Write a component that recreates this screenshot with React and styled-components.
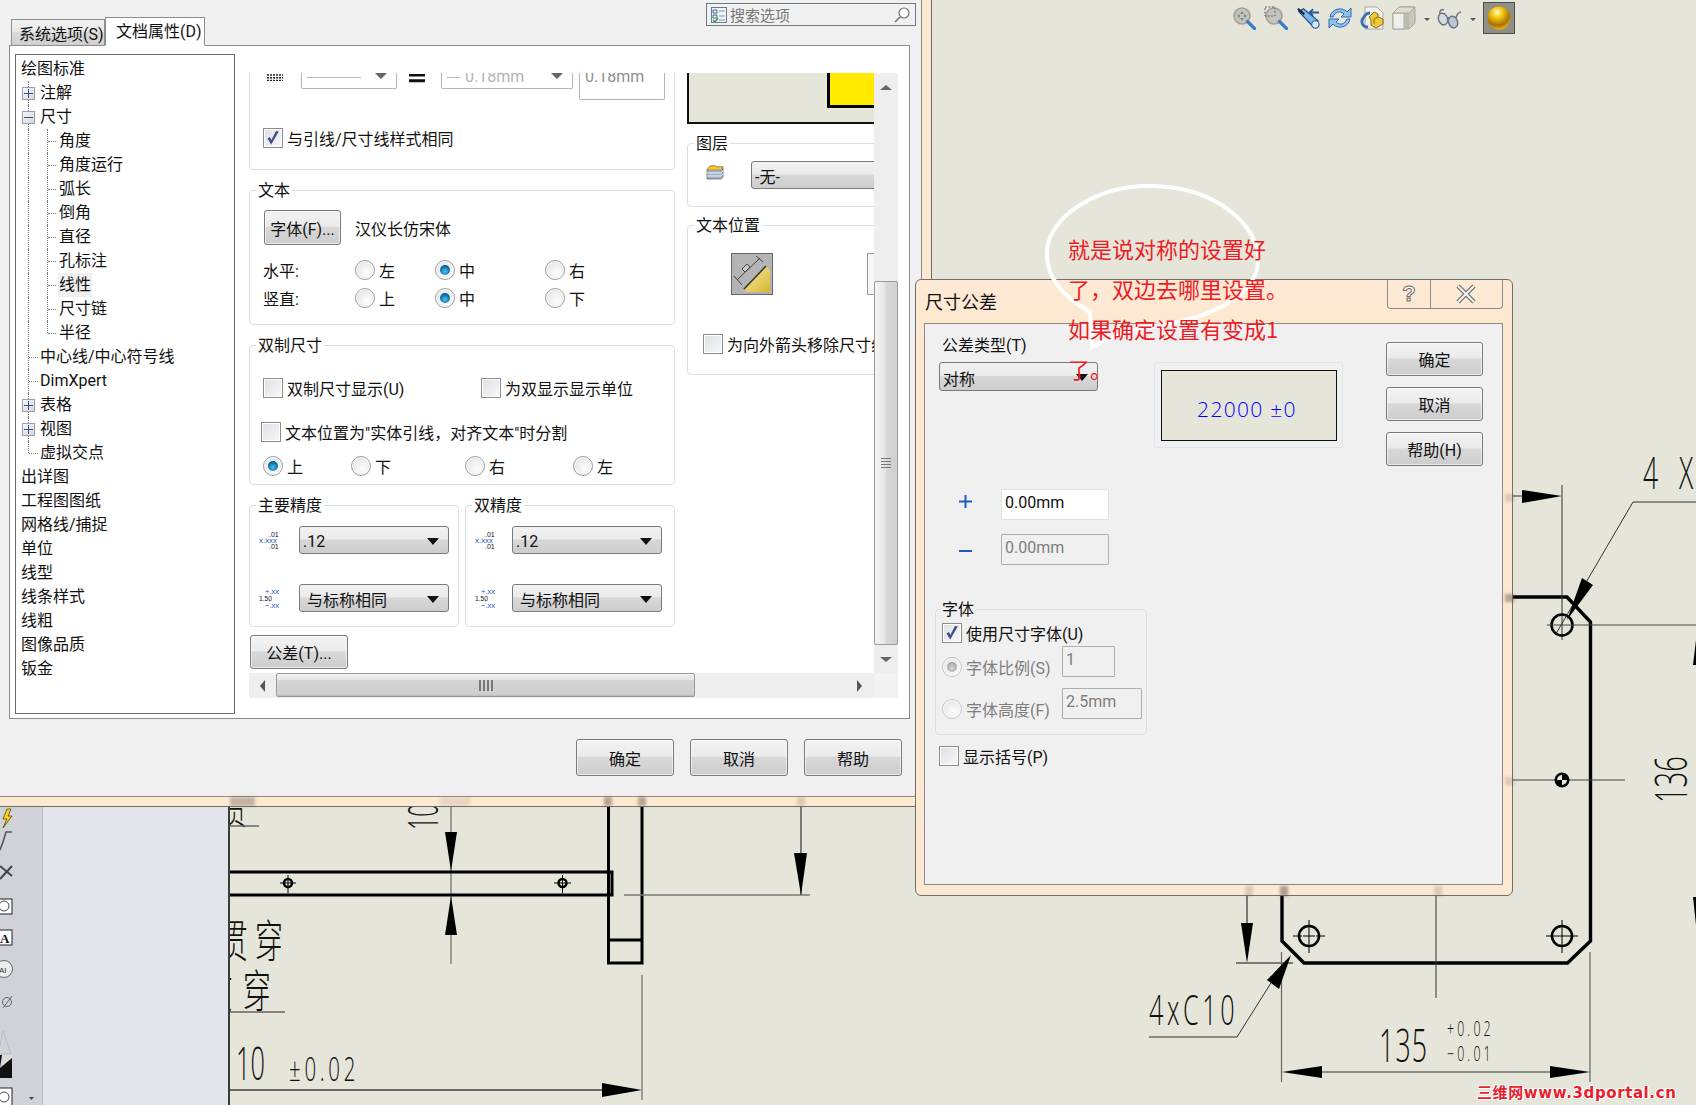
import React from "react";
import styled, { createGlobalStyle } from "styled-components";

const UI_FONT = `Roboto, "Noto Sans CJK SC", sans-serif`;

const GlobalStyle = createGlobalStyle`
  html, body { margin: 0; padding: 0; background: #e5e5da; }
  * { box-sizing: border-box; }
  body { font-family: ${UI_FONT}; font-size: 16px; color: #111; }
`;

const Page = styled.div`
  position: relative;
  width: 1696px;
  height: 1105px;
  overflow: hidden;
  display: flex;
  background: #e5e5da;
`;

/* ---------- workspace behind the dialogs ---------- */

const Palette = styled.div`
  width: 43px;
  display: flex;
  flex-direction: column;
  background: #cfd3d9;
  border-right: 1px solid #bcc0c6;
`;

const PaletteDrawing = styled.svg`
  display: block;
  margin-top: auto;
`;

const FeaturePanel = styled.div`
  width: 187px;
  background: #e2e6eb;
  border-right: 2px solid #3c3c3c;
`;

const CanvasArea = styled.div`
  flex: 1;
`;

const CadSvg = styled.svg`
  display: block;
`;

const CadLabel = styled.text`
  font-family: "Open Sans", "Liberation Sans", sans-serif;
  font-weight: 300;
  fill: #111;
`;

const CadHan = styled.text`
  font-family: "Noto Sans CJK SC", sans-serif;
  font-weight: 300;
  fill: #111;
`;

const CadToolbar = styled.div`
  position: absolute;
  left: 1232px;
  top: 2px;
  height: 32px;
  display: flex;
  align-items: center;
  gap: 8px;
`;

const ToolDrop = styled.span`
  width: 0;
  height: 0;
  margin: 3px -1px 0 0;
  border-left: 3px solid transparent;
  border-right: 3px solid transparent;
  border-top: 3px solid #555;
`;

const BallTool = styled.span`
  width: 32px;
  height: 32px;
  display: flex;
  align-items: center;
  justify-content: center;
  background: #8f8f86;
  border: 1px solid #4d4d4d;
`;

const Watermark = styled.div`
  position: absolute;
  left: 1477px;
  top: 1083px;
  font-family: "DejaVu Sans", "Noto Sans CJK SC", sans-serif;
  font-weight: 700;
  font-size: 15px;
  line-height: 20px;
  letter-spacing: 0.6px;
  color: #e8202c;
  white-space: nowrap;
  text-shadow: 1px 0 #fff, -1px 0 #fff, 0 1px #fff, 0 -1px #fff, 1px 1px #fff, -1px -1px #fff;
`;

/* ---------- shared dialog parts ---------- */

const Smudge = styled.span`
  position: absolute;
  left: ${(p) => p.$x}px;
  top: ${(p) => p.$y}px;
  width: ${(p) => p.$w}px;
  height: ${(p) => p.$h}px;
  background: rgba(90, 80, 70, ${(p) => p.$a});
  filter: blur(1.5px);
`;

const PushButton = styled.button`
  width: ${(p) => p.$w}px;
  height: ${(p) => p.$h}px;
  padding: 0;
  flex-shrink: 0;
  font-family: ${UI_FONT};
  font-size: 16px;
  color: #111;
  white-space: nowrap;
  border: 1px solid #7a7a7a;
  border-radius: 3px;
  background: linear-gradient(#f3f3f3 0, #ebebeb 46%, #d8d8d8 50%, #cdcdcd 100%);
  box-shadow: inset 0 0 0 1px rgba(255, 255, 255, 0.6);
`;

const Combo = styled.div`
  width: ${(p) => p.$w}px;
  height: ${(p) => p.$h}px;
  flex-shrink: 0;
  display: flex;
  align-items: center;
  justify-content: space-between;
  padding: 2px 9px 0 ${(p) => p.$pad ?? 3}px;
  font-size: 16px;
  white-space: nowrap;
  border: 1px solid #7a7a7a;
  border-radius: 3px;
  background: linear-gradient(#f1f1f1 0, #ebebeb 46%, #d8d8d8 50%, #cdcdcd 100%);
`;

const ComboArrow = styled.span`
  width: 0;
  height: 0;
  border-left: 6px solid transparent;
  border-right: 6px solid transparent;
  border-top: 7px solid ${(p) => p.$color || "#111"};
`;

const GroupBox = styled.div`
  position: relative;
  flex-shrink: 0;
  width: ${(p) => (p.$w ? `${p.$w}px` : "auto")};
  height: ${(p) => p.$h}px;
  margin-top: ${(p) => p.$mt || 0}px;
  padding: ${(p) => p.$pad || "0"};
  border: 1px solid #d6dfe7;
  border-radius: 4px;
`;

const GroupLegend = styled.span`
  position: absolute;
  left: ${(p) => p.$left ?? 6}px;
  top: -11px;
  padding: 0 2px;
  height: 22px;
  line-height: 22px;
  font-size: 16px;
  white-space: nowrap;
  background: ${(p) => p.$bg || "#fff"};
`;

const CheckBox = styled.span`
  display: flex;
  align-items: center;
  justify-content: center;
  width: 20px;
  height: 20px;
  flex-shrink: 0;
  border: 1px solid #8c8c8c;
  box-shadow: inset 0 0 0 1px #fff;
  background: linear-gradient(135deg, #dcdfe5, #f8f8f8);
`;

const Option = styled.label`
  display: flex;
  align-items: center;
  gap: 4px;
  white-space: nowrap;
  font-size: 16px;
  height: 20px;
  margin-left: ${(p) => p.$ml || 0}px;
  margin-top: ${(p) => p.$mt || 0}px;
  width: ${(p) => (p.$w ? `${p.$w}px` : "auto")};
  color: ${(p) => (p.$off ? "#7e7e7e" : "#111")};
`;

const RadioDot = styled.span`
  position: relative;
  width: 20px;
  height: 20px;
  flex-shrink: 0;
  border-radius: 50%;
  border: 1px solid ${(p) => (p.$off ? "#c6c6c6" : "#9c9c9c")};
  box-shadow: inset 0 0 0 1px #fff;
  background: radial-gradient(circle at 60% 65%, #fdfdfd, #dcdee2);

  &::after {
    content: "";
    display: ${(p) => (p.$on ? "block" : "none")};
    position: absolute;
    left: 4px;
    top: 4px;
    width: 10px;
    height: 10px;
    border-radius: 50%;
    background: ${(p) =>
      p.$off
        ? "radial-gradient(circle at 50% 60%, #d6d6d6, #8e8e8e)"
        : "radial-gradient(circle at 50% 65%, #4cc2ee, #0b6ca6 60%, #053a66)"};
  }
`;

function Check({ checked }) {
  return (
    <CheckBox>
      {checked && (
        <svg width="16" height="16" viewBox="0 0 16 16">
          <path d="M2.5 8.5 L6.2 14.5 L13.8 1.5 L11 1 L6.4 10 L5 7 Z" fill="#3f4d8c" />
        </svg>
      )}
    </CheckBox>
  );
}

/* ---------- main options dialog ---------- */

const MainFrame = styled.div`
  position: absolute;
  left: 0;
  top: 0;
  width: 932px;
  height: 807px;
  background: #fde8d2;
  border-right: 1px solid #6e6e66;
  border-bottom: 1px solid #6e6e66;
`;

const MainBody = styled.div`
  width: 922px;
  height: 797px;
  background: #f0f0f0;
  border-right: 1px solid #8c8c8c;
  border-bottom: 1px solid #8c8c8c;
`;

const TabStrip = styled.div`
  height: 45px;
  display: flex;
  align-items: flex-end;
  padding-left: 11px;
`;

const Tab = styled.div`
  position: relative;
  height: ${(p) => (p.$active ? 29 : 27)}px;
  width: ${(p) => p.$w}px;
  margin-bottom: -1px;
  padding: ${(p) => (p.$active ? "3px 0 0 10px" : "4px 0 0 7px")};
  font-size: 16px;
  line-height: 22px;
  white-space: nowrap;
  border: 1px solid #8f8f8f;
  border-bottom: ${(p) => (p.$active ? "1px solid #fff" : "1px solid #8f8f8f")};
  background: ${(p) =>
    p.$active ? "#fff" : "linear-gradient(#f2f2f2 0, #e8e8e8 45%, #d9d9d9 50%, #cfcfcf 100%)"};
  z-index: ${(p) => (p.$active ? 1 : 0)};
`;

const SearchBox = styled.div`
  align-self: flex-start;
  margin: 3px 5px 0 auto;
  width: 210px;
  height: 23px;
  display: flex;
  align-items: center;
  gap: 3px;
  padding: 0 4px;
  font-size: 15px;
  color: #777;
  background: #f1f1f1;
  border: 1px solid #6f7a80;
`;

const SearchText = styled.span`
  flex: 1;
`;

const OptionsPanel = styled.div`
  width: 901px;
  height: 674px;
  margin-left: 9px;
  padding: 8px 0 0 5px;
  display: flex;
  align-items: flex-start;
  background: #fff;
  border: 1px solid #8c8c8c;
`;

const Tree = styled.ul`
  list-style: none;
  width: 220px;
  height: 660px;
  margin: 0;
  padding: 2px 0 0;
  border: 1px solid #6c6c6c;
  background: #fff;
`;

const TreeRow = styled.li`
  position: relative;
  height: 24px;
  line-height: 24px;
  padding-left: ${(p) => [5, 24, 43][p.$level]}px;
  font-size: 16px;
  white-space: nowrap;
`;

const TreeText = styled.span`
  position: relative;
  z-index: 1;
  display: inline-block;
  padding: 0 1px;
  margin-left: -1px;
  background: ${(p) => (p.$selected ? "#f0f0f0" : "transparent")};
`;

const GuideV = styled.i`
  position: absolute;
  left: ${(p) => p.$left}px;
  top: 0;
  height: ${(p) => (p.$half ? "12px" : "24px")};
  border-left: 1px dotted #777;
`;

const GuideH = styled.i`
  position: absolute;
  left: ${(p) => p.$left}px;
  top: 12px;
  width: ${(p) => p.$w}px;
  border-top: 1px dotted #777;
`;

const Expander = styled.i`
  position: absolute;
  left: 6px;
  top: 6px;
  width: 13px;
  height: 13px;
  z-index: 1;
  border: 1px solid #9b9fa8;
  background: linear-gradient(135deg, #f7f7f7, #d5d7dc);

  &::before {
    content: "";
    position: absolute;
    left: 1px;
    top: 5px;
    width: 9px;
    height: 1px;
    background: #33508c;
  }

  &::after {
    content: "";
    display: ${(p) => (p.$open ? "none" : "block")};
    position: absolute;
    left: 5px;
    top: 1px;
    width: 1px;
    height: 9px;
    background: #33508c;
  }
`;

const ScrollArea = styled.div`
  margin: 19px 0 0 14px;
  display: grid;
  grid-template-columns: 625px 24px;
  grid-template-rows: 600px 25px;
`;

const ScrollView = styled.div`
  overflow: hidden;
  background: #fff;
`;

const ScrollContent = styled.div`
  display: flex;
  align-items: flex-start;
  gap: 12px;
  margin-top: -60px;
`;

const LeftColumn = styled.div`
  width: 426px;
  flex-shrink: 0;
`;

const RightColumn = styled.div`
  width: 230px;
  flex-shrink: 0;
`;

const LineRow = styled.div`
  display: flex;
  align-items: flex-start;
  padding: 39px 0 0 17px;
  height: 86px;
`;

const LineSwatch = styled.svg`
  flex-shrink: 0;
  margin: 21px 0 0 ${(p) => p.$ml || 0}px;
`;

const GhostField = styled.div`
  width: ${(p) => p.$w}px;
  height: ${(p) => p.$h}px;
  margin-left: ${(p) => p.$ml}px;
  flex-shrink: 0;
  display: flex;
  align-items: flex-start;
  justify-content: space-between;
  padding: 17px 9px 0 5px;
  font-size: 16px;
  line-height: 16px;
  color: ${(p) => p.$color || "#b3b3b3"};
  border: 1px solid #b4b4b4;
  border-top: 0;
  border-radius: 2px;
`;

const GhostDash = styled.span`
  flex: 1;
  min-height: 16px;
  display: flex;
  align-items: center;
  gap: 5px;
  margin-top: -1px;
`;

const GhostRule = styled.i`
  display: block;
  width: ${(p) => p.$w}px;
  height: 1px;
  background: #b8b8b8;
`;

const GhostArrow = styled.span`
  width: 0;
  height: 0;
  margin-top: 3px;
  border-left: 6px solid transparent;
  border-right: 6px solid transparent;
  border-top: 6px solid #666;
`;

const FontRow = styled.div`
  display: flex;
  align-items: center;
  padding: 19px 0 0 14px;
`;

const FontName = styled.span`
  margin-left: 14px;
  font-size: 16px;
`;

const RadioGrid = styled.div`
  display: grid;
  grid-template-columns: 92px 80px 110px auto;
  grid-auto-rows: 28px;
  align-items: center;
  margin-top: 11px;
  padding-left: 13px;
`;

const DualChecks = styled.div`
  display: flex;
  padding: 32px 0 0 13px;
`;

const RadioRow = styled.div`
  display: flex;
  margin-top: 14px;
  padding-left: 13px;
`;

const PrecisionRow = styled.div`
  display: flex;
  gap: 6px;
  margin-top: 20px;
`;

const PrecisionLine = styled.div`
  display: flex;
  align-items: center;
  gap: ${(p) => p.$gap}px;
  height: 28px;
  padding-left: 9px;
  margin-top: ${(p) => p.$mt}px;
`;

const IconText = styled.text`
  font-family: "Liberation Sans", sans-serif;
  font-size: ${(p) => p.$size || 7}px;
  fill: ${(p) => p.$fill || "#111"};
`;

const Preview = styled.div`
  height: 111px;
  padding-left: 138px;
  background: #e5e5da;
  border-left: 2px solid #111;
  border-bottom: 2px solid #111;
`;

const PreviewYellow = styled.div`
  width: 80px;
  height: 95px;
  background: #ffea00;
  border-left: 3px solid #000;
  border-bottom: 3px solid #000;
`;

const LayerRow = styled.div`
  display: flex;
  align-items: center;
  gap: 27px;
  padding: 17px 0 0 18px;
`;

const LayerIcon = styled.svg`
  flex-shrink: 0;
  margin-top: -6px;
`;

const ArrowRow = styled.div`
  display: flex;
  gap: 94px;
  padding: 27px 0 0 43px;
`;

const ArrowTile = styled.div`
  width: ${(p) => p.$w}px;
  height: 42px;
  background: ${(p) => (p.$plain ? "#f7f7f7" : "#b4b4b4")};
  border: 1px solid ${(p) => (p.$plain ? "#9a9a9a" : "#666")};
  flex-shrink: 0;
`;

const ScrollTrackV = styled.div`
  grid-column: 2;
  grid-row: 1;
  display: flex;
  flex-direction: column;
  background: #eeeeee;
`;

const ArrowCell = styled.div`
  display: flex;
  align-items: center;
  justify-content: ${(p) => (p.$pl ? "flex-start" : "center")};
  flex-shrink: 0;
  width: ${(p) => p.$w || 24}px;
  height: ${(p) => p.$h || 25}px;
  padding-left: ${(p) => p.$pl || 0}px;
`;

const ScrollThumbV = styled.div`
  width: 24px;
  height: 364px;
  margin-top: 180px;
  display: flex;
  flex-direction: column;
  align-items: center;
  justify-content: center;
  gap: 2px;
  border: 1px solid #9a9a9a;
  border-radius: 2px;
  background: linear-gradient(90deg, #f4f4f4 0, #e6e6e6 45%, #d8d8d8 50%, #cfcfcf 100%);
`;

const GripH = styled.i`
  display: block;
  width: 10px;
  height: 1px;
  background: #777;
`;

const ScrollTrackH = styled.div`
  grid-column: 1;
  grid-row: 2;
  display: flex;
  background: #eeeeee;
`;

const ScrollThumbH = styled.div`
  width: 419px;
  height: 24px;
  display: flex;
  align-items: center;
  justify-content: center;
  gap: 2px;
  border: 1px solid #9a9a9a;
  border-radius: 2px;
  background: linear-gradient(#f3f3f3 0, #e6e6e6 25%, #d4d4d6 30%, #cfcfd1 90%, #bcbcbc 100%);
`;

const GripV = styled.i`
  display: block;
  width: 2px;
  height: 11px;
  background: #777;
`;

const ScrollCorner = styled.div`
  grid-column: 2;
  grid-row: 2;
  background: #f2f2f2;
`;

const Triangle = styled.span`
  width: 0;
  height: 0;
  ${(p) =>
    p.$dir === "up" && `border-left:6px solid transparent;border-right:6px solid transparent;border-bottom:5px solid #666;`}
  ${(p) =>
    p.$dir === "down" && `border-left:6px solid transparent;border-right:6px solid transparent;border-top:5px solid #666;`}
  ${(p) =>
    p.$dir === "left" && `border-top:6px solid transparent;border-bottom:6px solid transparent;border-right:5px solid #555;`}
  ${(p) =>
    p.$dir === "right" && `border-top:6px solid transparent;border-bottom:6px solid transparent;border-left:5px solid #555;`}
`;

const DialogFooter = styled.div`
  display: flex;
  justify-content: flex-end;
  gap: 16px;
  padding: 20px 19px 0 0;
`;

const ToleranceOpen = styled.div`
  margin: 8px 0 0 1px;
`;

/* ---------- tolerance dialog ---------- */

const ToleranceFrame = styled.div`
  position: absolute;
  left: 915px;
  top: 279px;
  width: 598px;
  height: 617px;
  display: flex;
  flex-direction: column;
  border: 1px solid #6f6f69;
  border-radius: 6px;
  background: linear-gradient(#fde9d5, #fde7cf 60px, #fde8d2);
`;

const TitleBar = styled.div`
  height: 43px;
  flex-shrink: 0;
  display: flex;
  align-items: flex-start;
  padding-left: 9px;
`;

const TitleText = styled.span`
  margin-top: 10px;
  font-size: 18px;
  line-height: 25px;
`;

const WindowButtons = styled.div`
  display: flex;
  margin: 0 9px 0 auto;
  width: 116px;
  height: 29px;
  border: 1px solid #8d8d8d;
  border-top: 0;
  border-radius: 0 0 4px 4px;
`;

const WindowButton = styled.span`
  flex: ${(p) => p.$flex};
  display: flex;
  align-items: center;
  justify-content: center;
  border-left: ${(p) => (p.$sep ? "1px solid #8d8d8d" : "0")};
`;

const HelpGlyph = styled.span`
  font-family: "Liberation Sans", sans-serif;
  font-weight: 700;
  font-size: 22px;
  line-height: 24px;
  color: #fff;
  -webkit-text-stroke: 1px #6a6a6a;
`;

const ToleranceBody = styled.div`
  flex: 1;
  margin: 0 9px 10px 8px;
  background: #f0f0f0;
  border: 1px solid #8a8a8a;
`;

const TopRow = styled.div`
  display: flex;
  align-items: flex-start;
  padding-left: 14px;
`;

const TypeColumn = styled.div`
  width: 159px;
  margin-top: 10px;
`;

const FieldCaption = styled.div`
  height: 28px;
  line-height: 24px;
  padding-left: 3px;
  font-size: 16px;
`;

const SamplePane = styled.div`
  width: 189px;
  height: 86px;
  margin: 38px 0 0 56px;
  padding: 7px 6px;
  border: 1px solid #dde5ec;
  border-radius: 3px;
`;

const SampleBox = styled.div`
  width: 176px;
  height: 71px;
  display: flex;
  align-items: center;
  justify-content: center;
  padding: 6px 4px 0 0;
  background: #e5e5da;
  border: 1.5px solid #111;
  color: #0000ff;
  font-family: "Open Sans", sans-serif;
  font-weight: 300;
  font-size: 21px;
  letter-spacing: 1.3px;
`;

const ActionColumn = styled.div`
  display: flex;
  flex-direction: column;
  gap: 11px;
  margin: 18px 0 0 43px;
`;

const ToleranceLine = styled.div`
  display: flex;
  align-items: center;
  padding-left: 34px;
  margin-top: ${(p) => p.$mt}px;
`;

const SignMark = styled.svg`
  width: 13px;
  margin: ${(p) => p.$raise || 0}px 29px 0 0;
  flex-shrink: 0;
`;

const TextField = styled.div`
  width: ${(p) => p.$w}px;
  height: 31px;
  flex-shrink: 0;
  padding: 1px 3px;
  line-height: 24px;
  font-size: 16px;
  color: ${(p) => (p.$off ? "#7e7e7e" : "#111")};
  background: ${(p) => (p.$off ? "#f0f0f0" : "#fff")};
  border: 1px solid ${(p) => (p.$off ? "#aeaeae" : "#e2e2e2")};
  border-radius: 1px;
`;

const FontGroup = styled(GroupBox)`
  margin-left: 10px;
  padding: 13px 0 0 6px;
`;

const FontLine = styled.div`
  display: flex;
  align-items: flex-end;
  margin-top: ${(p) => p.$mt}px;
`;

const FontOption = styled(Option)`
  width: 120px;
`;

/* ---------- annotation drawn over everything ---------- */

const BubbleOutline = styled.svg`
  position: absolute;
  left: 1030px;
  top: 170px;
`;

const Annotation = styled.div`
  position: absolute;
  left: 1068px;
  top: 228px;
  font-family: "Noto Sans CJK SC", sans-serif;
  font-size: 22px;
  line-height: 40px;
  white-space: nowrap;
  color: #ee1c25;
`;

/* ---------- small drawings ---------- */

function MagnifierIcon({ boxed }) {
  return (
    <svg width="24" height="24" viewBox="0 0 24 24">
      <circle cx="10" cy="10" r="8" fill="#c4c4bc" stroke="#a2a29b" strokeWidth="1.6" />
      {boxed ? (
        <rect x="1" y="1" width="10" height="9" fill="none" stroke="#5c5c5c" strokeDasharray="2 1.5" />
      ) : (
        <path d="M10 5 L12 8 H8 Z M10 15 L12 12 H8 Z M5 10 L8 8 V12 Z M15 10 L12 8 V12 Z" fill="#8a8a8a" />
      )}
      <path d="M15.5 15.5 L22.5 22.5" stroke="#3a7cc4" strokeWidth="3.2" strokeLinecap="round" />
    </svg>
  );
}

function ViewSelectorIcon() {
  return (
    <svg width="24" height="24" viewBox="0 0 26 24">
      <path d="M3 5 L8 2 L24 15 L19 22 Z" fill="#79b8ec" stroke="#1f4676" strokeWidth="1.2" />
      <ellipse cx="21" cy="19" rx="4" ry="4" fill="#d5eafa" stroke="#2d5e96" strokeWidth="1.3" />
      <path d="M2 2 L9 8" stroke="#16243c" strokeWidth="2.4" />
      <path d="M25 6 H15 M18.5 2.5 L14.5 6 L18.5 9.5" fill="none" stroke="#2d5a9c" strokeWidth="2" />
    </svg>
  );
}

function RefreshIcon() {
  return (
    <svg width="24" height="24" viewBox="0 0 24 24">
      <path d="M2 11 C3 3 14 0 19 6 L23 2 V11 H13 L16 8 C12 4 7 6 5 11 Z" fill="#8fc0ee" stroke="#2f6cb2" />
      <path d="M22 13 C21 21 10 24 5 18 L1 22 V13 H11 L8 16 C12 20 17 18 19 13 Z" fill="#8fc0ee" stroke="#2f6cb2" />
    </svg>
  );
}

function PartIcon() {
  return (
    <svg width="24" height="24" viewBox="0 0 24 24">
      <path d="M5 1 H17 L23 7 V23 H5 Z" fill="#f0f1ef" stroke="#a8a8a8" />
      <path d="M4 11 C0 15 2 21 8 21 M10 7 C7 7 5 9 4 11" fill="none" stroke="#3a70b0" strokeWidth="2.8" />
      <path d="M9 11 L14 6 L18 8 L18 11 L23 13 L23 18 L16 22 L11 19 V14 Z" fill="#f0c93a" stroke="#8c6d14" />
      <path d="M14 13 L18 11 M14 13 V18" stroke="#8c6d14" />
    </svg>
  );
}

function BoxIcon() {
  return (
    <svg width="24" height="24" viewBox="0 0 24 24">
      <path d="M1 7 L7 1 H23 V17 L17 23 H1 Z" fill="#c7c7bc" stroke="#a5a59b" />
      <path d="M1 7 H12 V23 H1 Z" fill="#eeeeea" stroke="#a5a59b" />
      <path d="M1 7 L7 1 H23 L17 7 Z" fill="#dcdcd2" stroke="#a5a59b" />
      <path d="M12 7 H17 V23 H12 Z" fill="#b9b9ae" />
    </svg>
  );
}

function GlassesIcon() {
  return (
    <svg width="25" height="24" viewBox="0 0 25 24">
      <ellipse cx="6" cy="13" rx="4.5" ry="6" fill="#d6dbe0" stroke="#6d7380" strokeWidth="1.5" transform="rotate(-20 6 13)" />
      <ellipse cx="16" cy="16" rx="4.5" ry="6" fill="#b8c6d8" stroke="#6d7380" strokeWidth="1.5" transform="rotate(-20 16 16)" />
      <path d="M10 12 L13 12 M3 8 C2 4 5 3 7 4 M19 12 C20 8 22 6 24 6" fill="none" stroke="#6d7380" strokeWidth="1.5" />
    </svg>
  );
}

function GoldBallIcon() {
  return (
    <svg width="24" height="24" viewBox="0 0 24 24">
      <defs>
        <radialGradient id="gold" cx="42%" cy="26%" r="75%">
          <stop offset="0" stopColor="#fffbd0" />
          <stop offset="0.3" stopColor="#f7cc12" />
          <stop offset="0.75" stopColor="#a86f04" />
          <stop offset="1" stopColor="#f0b414" />
        </radialGradient>
      </defs>
      <circle cx="12" cy="12" r="11.5" fill="url(#gold)" />
    </svg>
  );
}

function ChecklistIcon() {
  return (
    <svg width="16" height="16" viewBox="0 0 16 16">
      <rect x="0.5" y="0.5" width="15" height="15" fill="#eef3f6" stroke="#5e7f9a" />
      <path d="M2 3 H6 V6 H2 Z M2 8 H6 V11 H2 Z" fill="none" stroke="#46688a" />
      <path d="M8 4 H14 M8 9 H14 M8 13 H14" stroke="#8a9aa8" />
      <path d="M2 13 L4 15 L7 11" fill="none" stroke="#3a9a3a" strokeWidth="1.4" />
    </svg>
  );
}

function SearchGlass() {
  return (
    <svg width="18" height="18" viewBox="0 0 18 18">
      <circle cx="11" cy="7" r="5" fill="#fafafa" stroke="#777" strokeWidth="1.2" />
      <path d="M7 11 L2 16" stroke="#777" strokeWidth="1.6" />
    </svg>
  );
}

function PrecisionTop() {
  return (
    <svg width="20" height="18" viewBox="0 0 20 18">
      <IconText x="10" y="6" $size="7">.01</IconText>
      <IconText x="0" y="12" $size="8" $fill="#1e54c8" textLength="18" lengthAdjust="spacingAndGlyphs">x.xxx</IconText>
      <IconText x="10" y="18" $size="7">.01</IconText>
    </svg>
  );
}

function PrecisionBottom() {
  return (
    <svg width="20" height="20" viewBox="0 0 20 20">
      <IconText x="6" y="6" $size="8" $fill="#1e54c8" textLength="14" lengthAdjust="spacingAndGlyphs">+.xx</IconText>
      <IconText x="0" y="13" $size="7.5" textLength="13" lengthAdjust="spacingAndGlyphs">1.50</IconText>
      <IconText x="6" y="20" $size="8" $fill="#1e54c8" textLength="14" lengthAdjust="spacingAndGlyphs">−.xx</IconText>
    </svg>
  );
}

function TextPlacementIcon() {
  return (
    <svg width="40" height="40" viewBox="0 0 40 40">
      <defs>
        <linearGradient id="wedge" x1="0" y1="0" x2="1" y2="1">
          <stop offset="0" stopColor="#f6ecaa" />
          <stop offset="1" stopColor="#d8b62f" />
        </linearGradient>
      </defs>
      <path d="M12 34 L34 12 L38 16 V38 H14 Z" fill="url(#wedge)" />
      <path d="M12 35 L34 12" stroke="#333" strokeWidth="1.6" />
      <path d="M5 26 L28 4 M2 22 L10 31 M24 2 L31 8" fill="none" stroke="#444" strokeWidth="1" />
      <path d="M10 15 L15 10 L18 13 L13 18 Z" fill="#c9c9c9" stroke="#444" />
    </svg>
  );
}

function PaletteIcons() {
  return (
    <PaletteDrawing width="42" height="299" viewBox="0 0 42 299">
      <path d="M7 3 L3 13 H7 L3 22 L12 10 H8 L11 3 Z" fill="#ffd21e" stroke="#554400" strokeWidth="0.8" />
      <path d="M0 44 L3 36 L6 26 H12" fill="none" stroke="#555" strokeWidth="1.6" />
      <path d="M0 73 L12 60 M0 60 L12 70" fill="none" stroke="#444" strokeWidth="2" />
      <rect x="-3" y="93" width="15" height="15" fill="#fff" stroke="#222" />
      <circle cx="4" cy="100" r="5" fill="#fff" stroke="#444" />
      <rect x="-3" y="124" width="15" height="15" fill="#fff" stroke="#222" />
      <text x="0" y="137" fontSize="13" fontWeight="700" fontFamily="Liberation Serif" fill="#111">A</text>
      <circle cx="4" cy="163" r="8.5" fill="#eee" stroke="#666" />
      <text x="-1" y="167" fontSize="8" fontFamily="Liberation Sans" fill="#333">AI</text>
      <circle cx="7" cy="196" r="4.5" fill="none" stroke="#666" />
      <path d="M3 202 L12 190" stroke="#666" />
      <path d="M-2 248 L3 225 L11 248 Z" fill="none" stroke="#bbb" />
      <rect x="-2" y="249" width="14" height="23" fill="#111" />
      <path d="M2 249 L12 249 L12 252 L0 262 Z" fill="#ddd" />
      <rect x="-3" y="282" width="15" height="18" fill="#fff" stroke="#222" />
      <circle cx="4" cy="291" r="5" fill="#fff" stroke="#444" />
      <path d="M29 291 L34 291 L31.5 294 Z" fill="#444" />
    </PaletteDrawing>
  );
}

function CadDrawing() {
  return (
    <CadSvg width="1466" height="1105" viewBox="230 0 1466 1105">
      {/* left view */}
      <g transform="translate(222 824) scale(0.62 1)">
        <CadHan fontSize="40">贯</CadHan>
      </g>
      <path d="M230 826 H259" stroke="#666" strokeWidth="1.5" />
      <g transform="translate(438 830) rotate(-90) scale(0.55 1)">
        <CadLabel fontSize="42" fontWeight="400">10</CadLabel>
      </g>
      <path d="M451 800 V964" stroke="#555" strokeWidth="1" />
      <path d="M445 832 H457 L451 871 Z M445 935 H457 L451 896 Z" fill="#000" />
      <path d="M230 872 H612 V895 H230" fill="none" stroke="#000" strokeWidth="3" />
      <path d="M608.5 800 V963 H642 V800 M608.5 940 H642" fill="none" stroke="#000" strokeWidth="3" />
      <circle cx="288" cy="883" r="4" fill="none" stroke="#000" strokeWidth="2.5" />
      <path d="M280 883 H296 M288 875 V893" stroke="#000" />
      <circle cx="562.5" cy="883" r="4" fill="none" stroke="#000" strokeWidth="2.5" />
      <path d="M554 883 H571 M562.5 875 V893" stroke="#000" />
      <path d="M624 895 H810" stroke="#777" strokeWidth="1.5" />
      <path d="M801 800 V895" stroke="#555" strokeWidth="1.5" />
      <path d="M794 853 H807 L801 895 Z" fill="#000" />
      <g transform="translate(220 958) scale(0.62 1)">
        <CadHan fontSize="45">贯</CadHan>
      </g>
      <g transform="translate(255 958) scale(0.62 1)">
        <CadHan fontSize="45">穿</CadHan>
      </g>
      <g transform="translate(205 1008) scale(0.62 1)">
        <CadHan fontSize="45">贯</CadHan>
      </g>
      <g transform="translate(243 1008) scale(0.62 1)">
        <CadHan fontSize="45">穿</CadHan>
      </g>
      <path d="M230 1012 H285" stroke="#222" />
      <g transform="translate(236 1080) scale(0.55 1)">
        <CadLabel fontSize="46">10</CadLabel>
      </g>
      <g transform="translate(289 1081) scale(0.62 1)">
        <CadLabel fontSize="33" letterSpacing="6">±0.02</CadLabel>
      </g>
      <path d="M230 1090 H602" stroke="#666" strokeWidth="2" />
      <path d="M602 1083 L642 1090 L602 1097 Z" fill="#000" />
      <path d="M642 975 V1100" stroke="#555" />

      {/* right view */}
      <path d="M1513 597 H1567 L1590.5 622 V941 L1567.5 963 H1304 L1282 941 V890" fill="none" stroke="#000" strokeWidth="3.4" />
      <path d="M1247 890 V925" stroke="#555" strokeWidth="1.5" />
      <path d="M1241 923 H1253 L1247 963 Z" fill="#000" />
      <path d="M1236 963 H1293" stroke="#555" strokeWidth="1.5" />
      <path d="M1281.5 952 V1082 M1590 952 V1082" stroke="#666" strokeWidth="1.2" />
      <path d="M1436 890 V998" stroke="#333" />
      <path d="M1300 1072 H1570" stroke="#333" />
      <path d="M1282 1072 L1322 1066 V1078 Z M1590 1072 L1550 1066 V1078 Z" fill="#000" />
      <circle cx="1309" cy="936" r="10" fill="none" stroke="#000" strokeWidth="2.6" />
      <path d="M1293 936 H1302 M1316 936 H1325 M1309 920 V953 M1303 936 H1315" stroke="#000" />
      <circle cx="1562" cy="936" r="10" fill="none" stroke="#000" strokeWidth="2.6" />
      <path d="M1546 936 H1578 M1562 920 V953" stroke="#000" />
      <path d="M1149 1037 H1237 L1276 975" fill="none" stroke="#333" />
      <path d="M1291 955 L1279 989 L1267 980 Z" fill="#000" />
      <g transform="translate(1149 1025) scale(0.6 1)">
        <CadLabel fontSize="42" letterSpacing="6">4xC10</CadLabel>
      </g>
      <g transform="translate(1379 1062) scale(0.58 1)">
        <CadLabel fontSize="46" letterSpacing="2">135</CadLabel>
      </g>
      <g transform="translate(1447 1036) scale(0.62 1)">
        <CadLabel fontSize="20" letterSpacing="5">+0.02</CadLabel>
      </g>
      <g transform="translate(1447 1061) scale(0.62 1)">
        <CadLabel fontSize="20" letterSpacing="5">−0.01</CadLabel>
      </g>

      <path d="M1513 496 H1525" stroke="#333" />
      <path d="M1522 490 L1562 496 L1522 503 Z" fill="#000" />
      <path d="M1562 485 V640" stroke="#333" />
      <circle cx="1562" cy="625" r="10.5" fill="none" stroke="#000" strokeWidth="2.6" />
      <path d="M1547 625 H1696" stroke="#444" />
      <path d="M1696 502 H1633 L1557 632" fill="none" stroke="#333" />
      <path d="M1567 620 L1582 578 L1593 585 Z" fill="#000" />
      <g transform="translate(1643 489) scale(0.6 1)">
        <CadLabel fontSize="44">4</CadLabel>
      </g>
      <g transform="translate(1679 489) scale(0.6 1)">
        <CadLabel fontSize="44">X</CadLabel>
      </g>
      <path d="M1513 780 H1625" stroke="#444" />
      <circle cx="1562" cy="780" r="7.5" fill="#000" />
      <path d="M1562 775 A5 5 0 0 0 1557 780 H1562 Z M1562 785 A5 5 0 0 0 1567 780 H1562 Z" fill="#e5e5da" />
      <g transform="translate(1687 803) rotate(-90) scale(0.62 1)">
        <CadLabel fontSize="44">136</CadLabel>
      </g>
      <path d="M1693 665 L1696 640 V665 Z M1693 897 L1696 925 V897 Z" fill="#000" />
    </CadSvg>
  );
}

/* ---------- data ---------- */

const treeItems = [
  { label: "绘图标准", level: 0 },
  { label: "注解", level: 1, box: "plus" },
  { label: "尺寸", level: 1, box: "minus" },
  { label: "角度", level: 2 },
  { label: "角度运行", level: 2 },
  { label: "弧长", level: 2 },
  { label: "倒角", level: 2 },
  { label: "直径", level: 2 },
  { label: "孔标注", level: 2 },
  { label: "线性", level: 2, selected: true },
  { label: "尺寸链", level: 2 },
  { label: "半径", level: 2, last: true },
  { label: "中心线/中心符号线", level: 1 },
  { label: "DimXpert", level: 1 },
  { label: "表格", level: 1, box: "plus" },
  { label: "视图", level: 1, box: "plus" },
  { label: "虚拟交点", level: 1, last: true },
  { label: "出详图", level: 0 },
  { label: "工程图图纸", level: 0 },
  { label: "网格线/捕捉", level: 0 },
  { label: "单位", level: 0 },
  { label: "线型", level: 0 },
  { label: "线条样式", level: 0 },
  { label: "线粗", level: 0 },
  { label: "图像品质", level: 0 },
  { label: "钣金", level: 0 },
];

const dualRadios = [
  { label: "上", w: 88, on: true },
  { label: "下", w: 114 },
  { label: "右", w: 108 },
  { label: "左" },
];

function OptionTree() {
  return (
    <Tree>
      {treeItems.map((item) => (
        <TreeRow key={item.label} $level={item.level}>
          {item.level >= 1 && <GuideV $left={12} $half={item.last && item.level === 1} />}
          {item.level === 1 && !item.box && <GuideH $left={13} $w={9} />}
          {item.level === 2 && <GuideV $left={31} $half={item.last} />}
          {item.level === 2 && <GuideH $left={32} $w={8} />}
          {item.box && <Expander $open={item.box === "minus"} />}
          <TreeText $selected={item.selected}>{item.label}</TreeText>
        </TreeRow>
      ))}
    </Tree>
  );
}

function PrecisionGroup({ title, gap }) {
  return (
    <GroupBox $w={210} $h={122} $pad="20px 0 0 0">
      <GroupLegend>{title}</GroupLegend>
      <PrecisionLine $mt={0} $gap={gap}>
        <PrecisionTop />
        <Combo $w={150} $h={28}>
          .12
          <ComboArrow />
        </Combo>
      </PrecisionLine>
      <PrecisionLine $mt={30} $gap={gap}>
        <PrecisionBottom />
        <Combo $w={150} $h={28} $pad={7}>
          与标称相同
          <ComboArrow />
        </Combo>
      </PrecisionLine>
    </GroupBox>
  );
}

function LeftSettings() {
  return (
    <LeftColumn>
      <GroupBox $h={157}>
        <LineRow>
          <LineSwatch width="16" height="10" viewBox="0 0 16 10">
            <path d="M0 1 H16 M0 3.7 H16 M0 6.4 H16" stroke="#222" strokeDasharray="2 1" strokeWidth="1.4" />
          </LineSwatch>
          <GhostField $w={96} $h={36} $ml={18}>
            <GhostDash>
              <GhostRule $w={54} />
            </GhostDash>
            <GhostArrow />
          </GhostField>
          <LineSwatch width="16" height="10" viewBox="0 0 16 10" $ml={12}>
            <path d="M0 1 H16 M0 6.8 H16" stroke="#111" strokeWidth="3" />
          </LineSwatch>
          <GhostField $w={132} $h={36} $ml={16}>
            <GhostDash>
              <GhostRule $w={13} />
              0.18mm
            </GhostDash>
            <GhostArrow />
          </GhostField>
          <GhostField $w={86} $h={47} $ml={6} $color="#8e8e8e">
            <GhostDash>0.18mm</GhostDash>
          </GhostField>
        </LineRow>
        <Option $ml={13} $mt={28}>
          <Check checked />
          与引线/尺寸线样式相同
        </Option>
      </GroupBox>

      <GroupBox $h={135} $mt={20}>
        <GroupLegend>文本</GroupLegend>
        <FontRow>
          <PushButton $w={77} $h={35}>字体(F)...</PushButton>
          <FontName>汉仪长仿宋体</FontName>
        </FontRow>
        <RadioGrid>
          <span>水平:</span>
          <Option><RadioDot />左</Option>
          <Option><RadioDot $on />中</Option>
          <Option><RadioDot />右</Option>
          <span>竖直:</span>
          <Option><RadioDot />上</Option>
          <Option><RadioDot $on />中</Option>
          <Option><RadioDot />下</Option>
        </RadioGrid>
      </GroupBox>

      <GroupBox $h={140} $mt={20}>
        <GroupLegend>双制尺寸</GroupLegend>
        <DualChecks>
          <Option $w={218}>
            <Check />
            双制尺寸显示(U)
          </Option>
          <Option>
            <Check />
            为双显示显示单位
          </Option>
        </DualChecks>
        <Option $ml={11} $mt={24}>
          <Check />
          文本位置为"实体引线，对齐文本"时分割
        </Option>
        <RadioRow>
          {dualRadios.map((radio) => (
            <Option key={radio.label} $w={radio.w}>
              <RadioDot $on={radio.on} />
              {radio.label}
            </Option>
          ))}
        </RadioRow>
      </GroupBox>

      <PrecisionRow>
        <PrecisionGroup title="主要精度" gap={20} />
        <PrecisionGroup title="双精度" gap={17} />
      </PrecisionRow>
      <ToleranceOpen>
        <PushButton $w={98} $h={34}>公差(T)...</PushButton>
      </ToleranceOpen>
    </LeftColumn>
  );
}

function RightSettings() {
  return (
    <RightColumn>
      <Preview>
        <PreviewYellow />
      </Preview>
      <GroupBox $h={64} $mt={19}>
        <GroupLegend>图层</GroupLegend>
        <LayerRow>
          <LayerIcon width="18" height="15" viewBox="0 0 18 15">
            <path d="M1 5 L4 1 H10 L11 2 H17 V12 L15 14 H1 Z" fill="#9fb3cb" stroke="#556" strokeWidth="0.7" />
            <path d="M1 5 L4 1 H10 L11 2 H17 L15 5 Z" fill="#f5c93a" stroke="#a8801a" strokeWidth="0.7" />
            <path d="M1 8 H15 L17 6 M1 11 H15 L17 9" fill="none" stroke="#e8eef5" />
          </LayerIcon>
          <Combo $w={200} $h={28} $pad={3}>-无-</Combo>
        </LayerRow>
      </GroupBox>
      <GroupBox $h={150} $mt={18}>
        <GroupLegend>文本位置</GroupLegend>
        <ArrowRow>
          <ArrowTile $w={42}>
            <TextPlacementIcon />
          </ArrowTile>
          <ArrowTile $w={30} $plain />
        </ArrowRow>
        <Option $ml={15} $mt={39}>
          <Check />
          为向外箭头移除尺寸线
        </Option>
      </GroupBox>
    </RightColumn>
  );
}

function MainDialog() {
  return (
    <MainFrame>
      <MainBody>
        <TabStrip>
          <Tab $w={94}>系统选项(S)</Tab>
          <Tab $w={100} $active>文档属性(D)</Tab>
          <SearchBox>
            <ChecklistIcon />
            <SearchText>搜索选项</SearchText>
            <SearchGlass />
          </SearchBox>
        </TabStrip>
        <OptionsPanel>
          <OptionTree />
          <ScrollArea>
            <ScrollView>
              <ScrollContent>
                <LeftSettings />
                <RightSettings />
              </ScrollContent>
            </ScrollView>
            <ScrollTrackV>
              <ArrowCell $h={28}><Triangle $dir="up" /></ArrowCell>
              <ScrollThumbV>
                <GripH /><GripH /><GripH /><GripH />
              </ScrollThumbV>
              <ArrowCell $h={28}><Triangle $dir="down" /></ArrowCell>
            </ScrollTrackV>
            <ScrollTrackH>
              <ArrowCell $w={27}><Triangle $dir="left" /></ArrowCell>
              <ScrollThumbH>
                <GripV /><GripV /><GripV /><GripV />
              </ScrollThumbH>
              <ArrowCell $w={179} $pl={162}><Triangle $dir="right" /></ArrowCell>
            </ScrollTrackH>
            <ScrollCorner />
          </ScrollArea>
        </OptionsPanel>
        <DialogFooter>
          <PushButton $w={98} $h={37}>确定</PushButton>
          <PushButton $w={98} $h={37}>取消</PushButton>
          <PushButton $w={98} $h={37}>帮助</PushButton>
        </DialogFooter>
      </MainBody>
      <Smudge $x={230} $y={797} $w={25} $h={9} $a={0.35} />
      <Smudge $x={604} $y={797} $w={8} $h={9} $a={0.45} />
      <Smudge $x={638} $y={797} $w={8} $h={9} $a={0.45} />
      <Smudge $x={440} $y={797} $w={30} $h={9} $a={0.12} />
      <Smudge $x={797} $y={797} $w={8} $h={9} $a={0.2} />
    </MainFrame>
  );
}

function ToleranceDialog() {
  return (
    <ToleranceFrame>
      <TitleBar>
        <TitleText>尺寸公差</TitleText>
        <WindowButtons>
          <WindowButton $flex="43">
            <HelpGlyph>?</HelpGlyph>
          </WindowButton>
          <WindowButton $flex="73" $sep>
            <svg width="20" height="20" viewBox="0 0 20 20">
              <path d="M2 2 L18 18 M18 2 L2 18" stroke="#6a6a6a" strokeWidth="4.5" />
              <path d="M2 2 L18 18 M18 2 L2 18" stroke="#f3f3f3" strokeWidth="2.2" />
            </svg>
          </WindowButton>
        </WindowButtons>
      </TitleBar>
      <ToleranceBody>
        <TopRow>
          <TypeColumn>
            <FieldCaption>公差类型(T)</FieldCaption>
            <Combo $w={159} $h={29}>
              对称
              <ComboArrow />
            </Combo>
          </TypeColumn>
          <SamplePane>
            <SampleBox>22000 ±0</SampleBox>
          </SamplePane>
          <ActionColumn>
            <PushButton $w={97} $h={34}>确定</PushButton>
            <PushButton $w={97} $h={34}>取消</PushButton>
            <PushButton $w={97} $h={34}>帮助(H)</PushButton>
          </ActionColumn>
        </TopRow>
        <ToleranceLine $mt={23}>
          <SignMark height="13" viewBox="0 0 13 13" $raise={-6}>
            <path d="M0 6.5 H13 M6.5 0 V13" stroke="#2158c6" strokeWidth="2" />
          </SignMark>
          <TextField $w={108}>0.00mm</TextField>
        </ToleranceLine>
        <ToleranceLine $mt={14}>
          <SignMark height="13" viewBox="0 0 13 13">
            <path d="M0 8 H13" stroke="#2158c6" strokeWidth="2" />
          </SignMark>
          <TextField $w={108} $off>0.00mm</TextField>
        </ToleranceLine>
        <FontGroup $w={212} $h={126} $mt={44}>
          <GroupLegend $bg="#f0f0f0" $left={4}>字体</GroupLegend>
          <Option>
            <Check checked />
            使用尺寸字体(U)
          </Option>
          <FontLine $mt={3}>
            <FontOption $off><RadioDot $on $off />字体比例(S)</FontOption>
            <TextField $w={53} $off>1</TextField>
          </FontLine>
          <FontLine $mt={11}>
            <FontOption $off><RadioDot $off />字体高度(F)</FontOption>
            <TextField $w={80} $off>2.5mm</TextField>
          </FontLine>
        </FontGroup>
        <Option $ml={14} $mt={11}>
          <Check />
          显示括号(P)
        </Option>
      </ToleranceBody>
      <Smudge $x={329} $y={606} $w={8} $h={10} $a={0.2} />
      <Smudge $x={364} $y={606} $w={8} $h={10} $a={0.5} />
      <Smudge $x={518} $y={606} $w={8} $h={10} $a={0.2} />
      <Smudge $x={589} $y={214} $w={9} $h={8} $a={0.2} />
      <Smudge $x={589} $y={314} $w={9} $h={8} $a={0.45} />
      <Smudge $x={589} $y={497} $w={9} $h={8} $a={0.2} />
    </ToleranceFrame>
  );
}

function App() {
  return (
    <Page>
      <GlobalStyle />
      <Palette>
        <PaletteIcons />
      </Palette>
      <FeaturePanel />
      <CanvasArea>
        <CadDrawing />
      </CanvasArea>
      <CadToolbar>
        <MagnifierIcon />
        <MagnifierIcon boxed />
        <ViewSelectorIcon />
        <RefreshIcon />
        <PartIcon />
        <BoxIcon />
        <ToolDrop />
        <GlassesIcon />
        <ToolDrop />
        <BallTool>
          <GoldBallIcon />
        </BallTool>
      </CadToolbar>
      <MainDialog />
      <ToleranceDialog />
      <BubbleOutline width="240" height="190" viewBox="1030 170 240 190">
        <path
          d="M1092 347 L1090 312 C1060 295 1045 275 1047 250 C1050 215 1100 185 1150 186 C1215 186 1260 225 1258 262 C1256 300 1200 320 1160 325 C1135 328 1120 333 1092 347 Z"
          fill="none"
          stroke="#fff"
          strokeWidth="4"
        />
      </BubbleOutline>
      <Annotation>
        就是说对称的设置好
        <br />
        了，双边去哪里设置。
        <br />
        如果确定设置有变成1
        <br />
        了。
      </Annotation>
      <Watermark>三维网www.3dportal.cn</Watermark>
    </Page>
  );
}

export default App;
